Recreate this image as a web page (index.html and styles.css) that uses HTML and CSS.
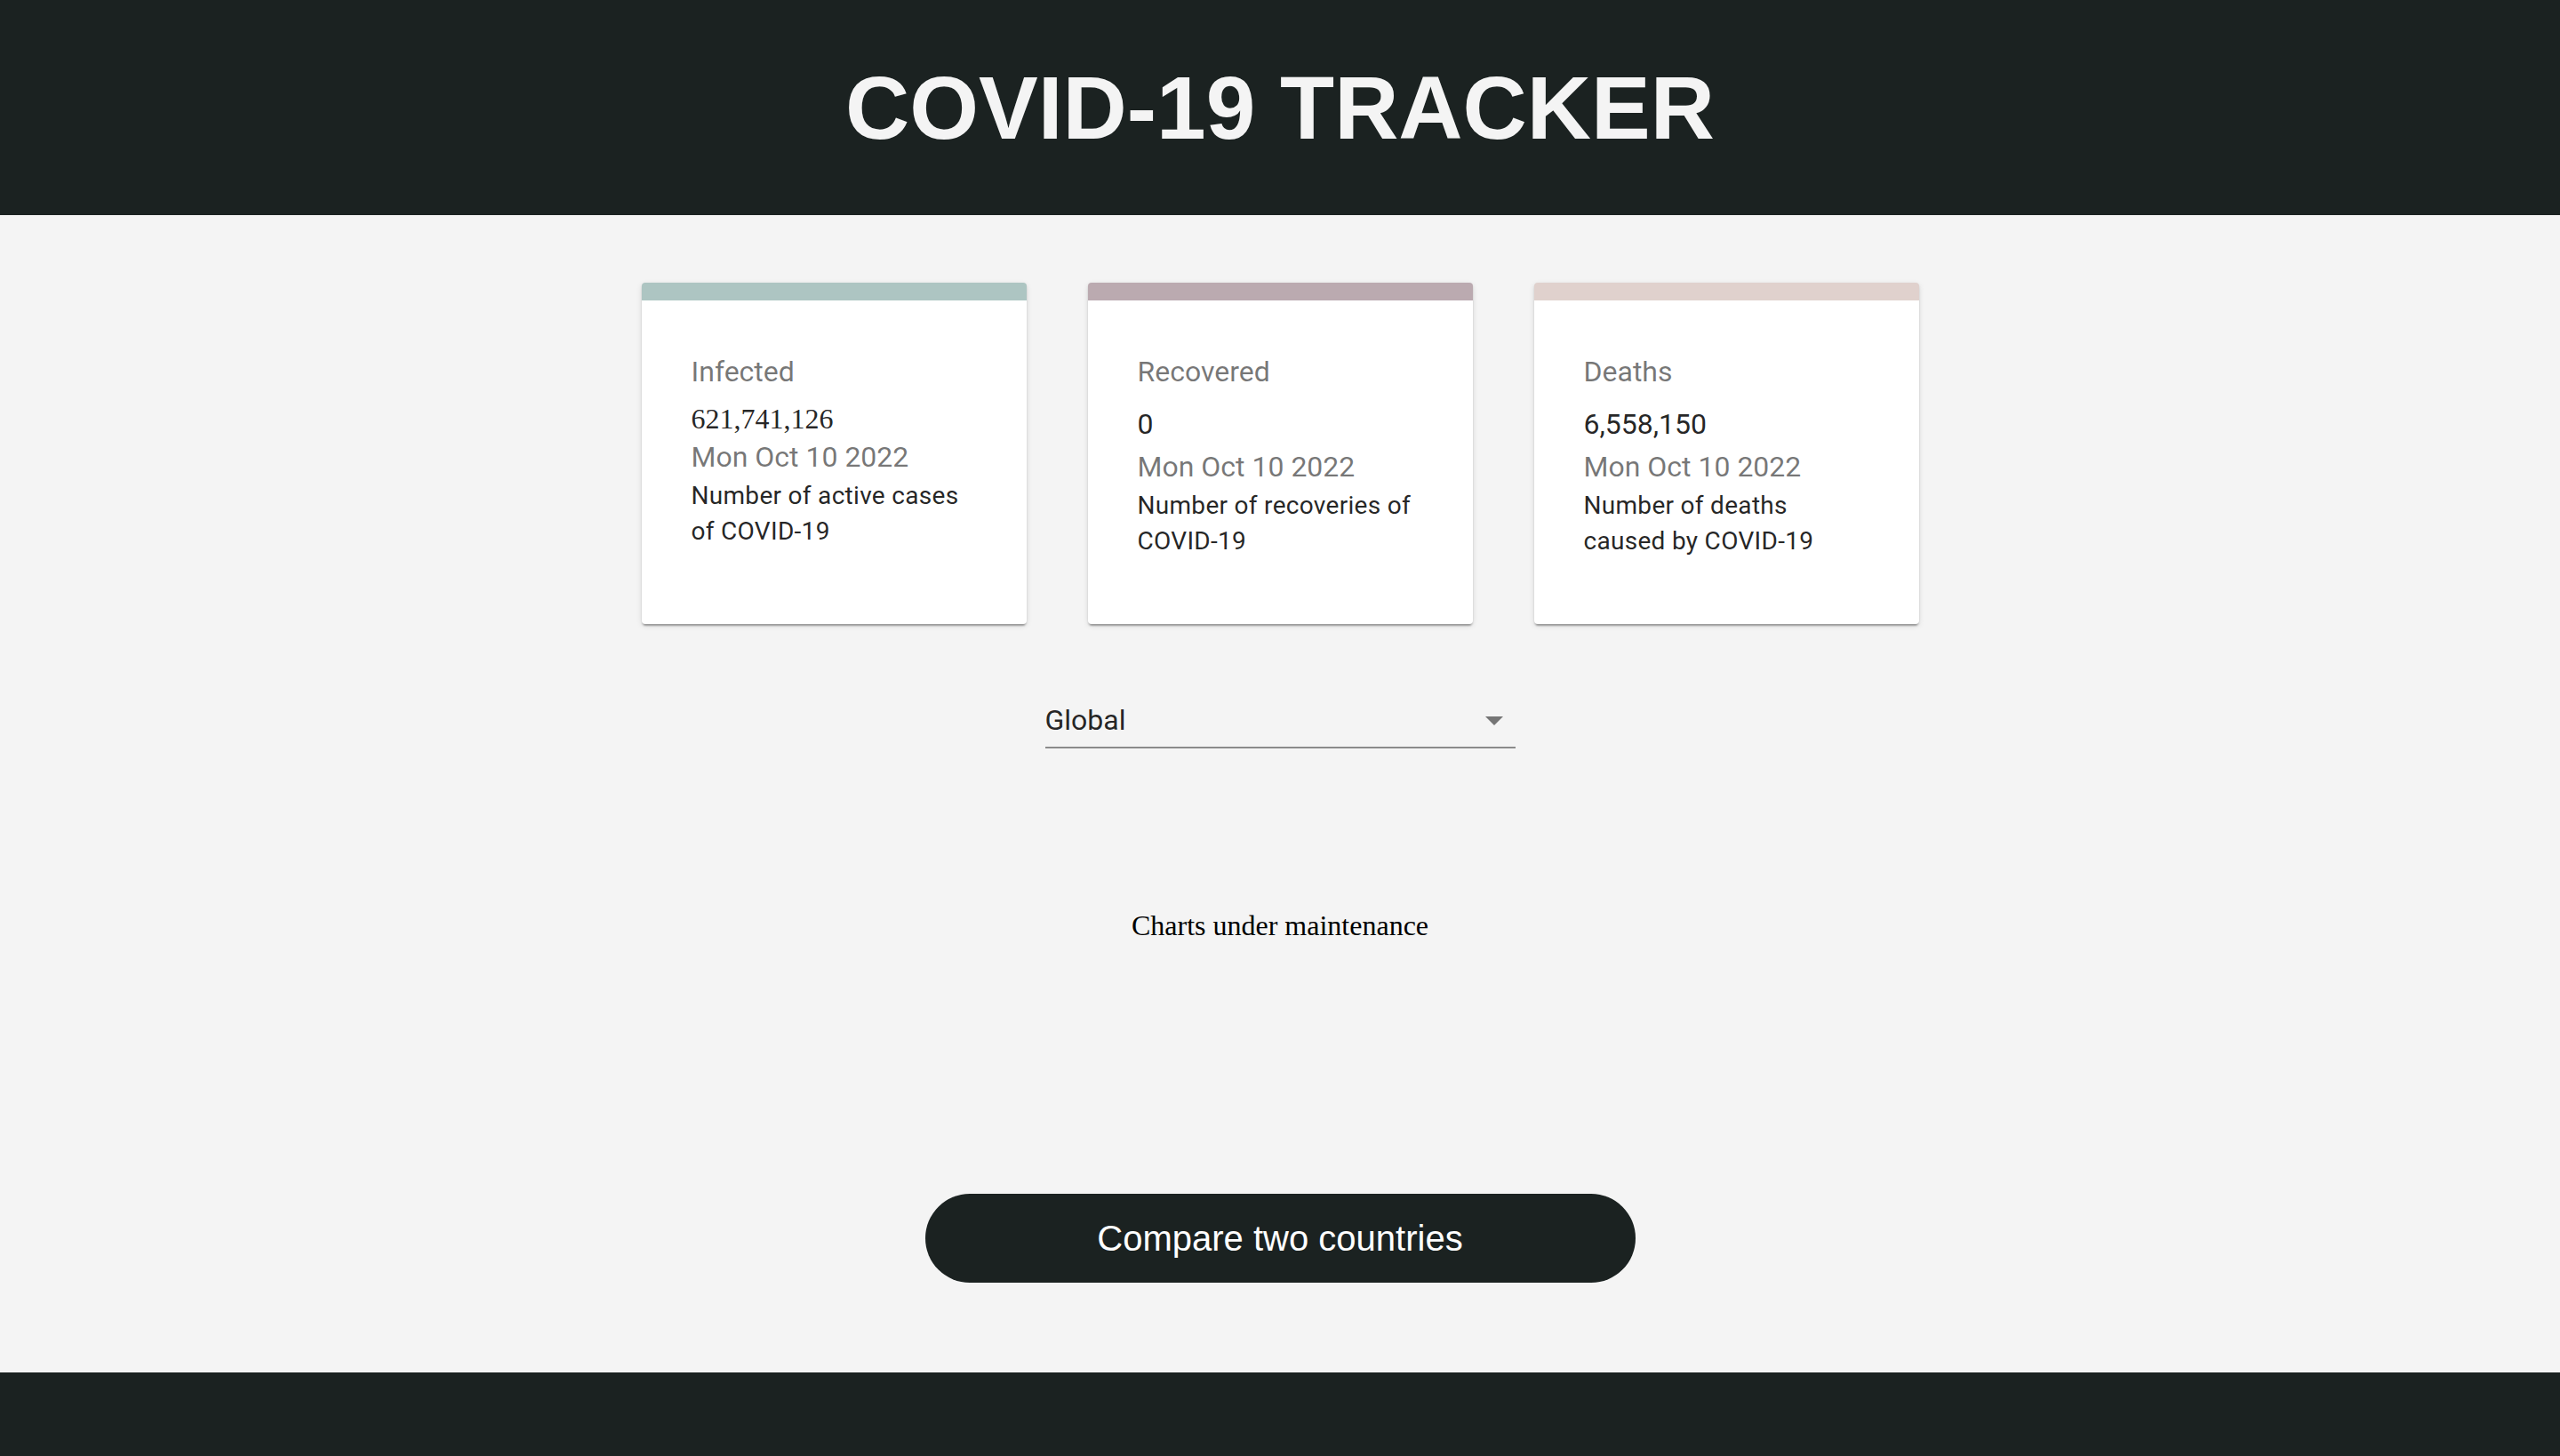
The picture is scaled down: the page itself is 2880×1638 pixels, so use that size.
FILE: index.html
```html
<!DOCTYPE html>
<html lang="en">
<head>
<meta charset="utf-8">
<title>COVID-19 Tracker</title>
<link rel="stylesheet" href="styles.css">
</head>
<body>
<header class="top-bar">
  <h1 class="brand">COVID-19 TRACKER</h1>
</header>
<main class="main">
  <section class="cards">
    <div class="card card-infected">
      <div class="card-body">
        <p class="card-label">Infected</p>
        <p class="card-value card-value-serif">621,741,126</p>
        <p class="card-date">Mon Oct 10 2022</p>
        <p class="card-text">Number of active cases of COVID-19</p>
      </div>
    </div>
    <div class="card card-recovered">
      <div class="card-body">
        <p class="card-label">Recovered</p>
        <p class="card-value">0</p>
        <p class="card-date">Mon Oct 10 2022</p>
        <p class="card-text">Number of recoveries of COVID-19</p>
      </div>
    </div>
    <div class="card card-deaths">
      <div class="card-body">
        <p class="card-label">Deaths</p>
        <p class="card-value">6,558,150</p>
        <p class="card-date">Mon Oct 10 2022</p>
        <p class="card-text">Number of deaths caused by COVID-19</p>
      </div>
    </div>
  </section>

  <div class="picker">
    <span class="picker-value">Global</span>
    <svg class="picker-icon" viewBox="0 0 24 24" width="48" height="48" aria-hidden="true"><path d="M7 10l5 5 5-5z"/></svg>
  </div>

  <p class="charts-note">Charts under maintenance</p>

  <button class="compare-btn" type="button">Compare two countries</button>
</main>
<footer class="bottom-bar"></footer>
</body>
</html>
```

FILE: styles.css
```css
* { box-sizing: border-box; }

html, body {
  margin: 0;
  padding: 0;
}

body {
  background: #f4f4f4;
  font-family: "Liberation Sans", Arial, sans-serif;
  min-height: 1638px;
  display: flex;
  flex-direction: column;
}

.top-bar {
  background: #1b2221;
  height: 242px;
  display: flex;
  align-items: center;
  justify-content: center;
}

.brand {
  margin: 0;
  color: #f4f4f4;
  font-family: "Liberation Sans", Arial, sans-serif;
  font-weight: 700;
  font-size: 100px;
  line-height: normal;
}

.main {
  flex: 1;
  display: flex;
  flex-direction: column;
  align-items: center;
  padding-top: 76px;
}

.cards {
  display: flex;
  justify-content: center;
  align-items: stretch;
  gap: 69px;
}

.card {
  width: 433px;
  background: #ffffff;
  border-radius: 4px;
  overflow: hidden;
  border-top: 20px solid #adc5c2;
  box-shadow: 0 4px 2px -2px rgba(0,0,0,0.2), 0 2px 2px 0 rgba(0,0,0,0.14), 0 2px 6px 0 rgba(0,0,0,0.12);
}

.card-infected { border-top-color: #adc5c2; }
.card-recovered { border-top-color: #bbaab0; }
.card-deaths { border-top-color: #e0d1cd; }

.card-body {
  padding: 56px 57px 73px 56px;
  font-family: Roboto, "Liberation Sans", sans-serif;
}

.card-body p { margin: 0; }

.card-label {
  font-size: 32px;
  line-height: 48px;
  color: rgba(0,0,0,0.54);
  margin-bottom: 11px !important;
}

.card-value {
  font-size: 32px;
  line-height: 48px;
  color: rgba(0,0,0,0.87);
}

.card-value-serif {
  font-family: "Liberation Serif", "Times New Roman", serif;
  line-height: normal;
}

.card-date {
  font-size: 32px;
  line-height: 48px;
  color: rgba(0,0,0,0.54);
}

.card-text {
  font-size: 28px;
  line-height: 40px;
  letter-spacing: 0.3px;
  color: rgba(0,0,0,0.87);
}

.picker {
  position: relative;
  width: 529px;
  margin-top: 89px;
  padding-bottom: 11px;
  border-bottom: 2px solid #8b8b8b;
  font-family: Roboto, "Liberation Sans", sans-serif;
  font-size: 32px;
  line-height: 38px;
  color: rgba(0,0,0,0.87);
}

.picker-value { display: block; }

.picker-icon {
  position: absolute;
  right: 0;
  top: -5px;
  fill: #757575;
}

.charts-note {
  margin: 181px 0 0;
  font-family: "Liberation Serif", "Times New Roman", serif;
  font-size: 32px;
  line-height: normal;
  color: #000;
}

.compare-btn {
  margin-top: 283px;
  width: 799px;
  height: 100px;
  border: none;
  border-radius: 50px;
  background: #1b2221;
  color: #ffffff;
  font-family: "Liberation Sans", Arial, sans-serif;
  font-size: 40px;
  line-height: normal;
  display: flex;
  align-items: center;
  justify-content: center;
  cursor: pointer;
}

.bottom-bar {
  background: #1b2221;
  height: 94px;
  margin-top: 101px;
}
```
